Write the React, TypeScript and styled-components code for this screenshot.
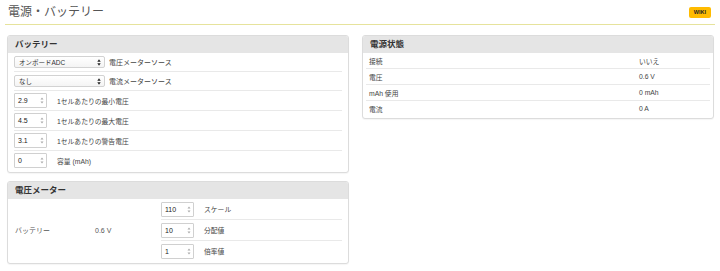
import { createGlobalStyle } from 'styled-components'
import styled from 'styled-components'

const GlobalStyle = createGlobalStyle`
    html, body {
        margin: 0;
        padding: 0;
        background: #fff;
    }
    body {
        font-family: "Liberation Sans", "Noto Sans CJK JP", sans-serif;
        color: #444;
    }
`

const Spinner = () => (
    <svg width="4" height="7" viewBox="0 0 4 7">
        <path d="M2 0.5 L3.5 2.5 L0.5 2.5 Z" fill="#aaa" />
        <path d="M2 6.5 L3.5 4.5 L0.5 4.5 Z" fill="#aaa" />
    </svg>
)

const SelectArrows = () => (
    <svg width="4" height="7" viewBox="0 0 4 7">
        <path d="M2 0.3 L3.7 2.7 L0.3 2.7 Z" fill="#222" />
        <path d="M2 6.7 L3.7 4.3 L0.3 4.3 Z" fill="#222" />
    </svg>
)

const NumberField = ({ value }: { value: string }) => (
    <NumberBox>
        <span>{value}</span>
        <Spinner />
    </NumberBox>
)

const SelectField = ({ value }: { value: string }) => (
    <SelectBox>
        <span>{value}</span>
        <SelectArrows />
    </SelectBox>
)

const batteryRows = [
    { value: '2.9', label: '1セルあたりの最小電圧' },
    { value: '4.5', label: '1セルあたりの最大電圧' },
    { value: '3.1', label: '1セルあたりの警告電圧' },
    { value: '0', label: '容量 (mAh)' },
]

const meterRows = [
    { value: '110', label: 'スケール' },
    { value: '10', label: '分配値' },
    { value: '1', label: '倍率値' },
]

const statusRows = [
    { label: '接続', value: 'いいえ' },
    { label: '電圧', value: '0.6 V' },
    { label: 'mAh 使用', value: '0 mAh' },
    { label: '電流', value: '0 A' },
]

const App = () => {
    return (
        <Page>
            <GlobalStyle />
            <Header>
                <Title>電源・バッテリー</Title>
                <WikiButton>WIKI</WikiButton>
            </Header>
            <Columns>
                <Column>
                    <Panel>
                        <PanelTitle>バッテリー</PanelTitle>
                        <PanelBody>
                            <Row $height={18}>
                                <SelectField value="オンボードADC" />
                                <SelectLabel>電圧メーターソース</SelectLabel>
                            </Row>
                            <Row $height={18}>
                                <SelectField value="なし" />
                                <SelectLabel>電流メーターソース</SelectLabel>
                            </Row>
                            {batteryRows.map((r) => (
                                <Row key={r.label} $height={19}>
                                    <NumberField value={r.value} />
                                    <FieldLabel>{r.label}</FieldLabel>
                                </Row>
                            ))}
                        </PanelBody>
                    </Panel>
                    <Panel>
                        <PanelTitle>電圧メーター</PanelTitle>
                        <MeterBody>
                            <MeterCell>バッテリー</MeterCell>
                            <MeterCell>0.6 V</MeterCell>
                            <MeterInputs>
                                {meterRows.map((r) => (
                                    <Row key={r.label} $height={20}>
                                        <NumberField value={r.value} />
                                        <FieldLabel>{r.label}</FieldLabel>
                                    </Row>
                                ))}
                            </MeterInputs>
                        </MeterBody>
                    </Panel>
                </Column>
                <Column>
                    <Panel>
                        <PanelTitle>電源状態</PanelTitle>
                        <StatusBody>
                            {statusRows.map((r) => (
                                <StatusRow key={r.label}>
                                    <span>{r.label}</span>
                                    <span>{r.value}</span>
                                </StatusRow>
                            ))}
                        </StatusBody>
                    </Panel>
                </Column>
            </Columns>
        </Page>
    )
}

const Page = styled.div`
    width: 720px;
    height: 271px;
    overflow: hidden;
    box-sizing: border-box;
`

const Header = styled.header`
    display: flex;
    justify-content: space-between;
    align-items: center;
    height: 24px;
    margin: 0 5px;
    padding: 0 4px 0 3px;
    border-bottom: 1px solid #e6e39c;
`

const Title = styled.h1`
    margin: 0;
    font-size: 12px;
    font-weight: normal;
    color: #555;
    line-height: 14px;
`

const WikiButton = styled.div`
    background: #ffbb00;
    color: #222;
    font-size: 5.5px;
    font-weight: bold;
    height: 11px;
    line-height: 11px;
    padding: 0 5px;
    border-radius: 2px;
`

const Columns = styled.div`
    display: grid;
    grid-template-columns: 342px 352px;
    gap: 13px;
    padding: 10px 0 0 7px;
`

const Column = styled.div`
    display: flex;
    flex-direction: column;
    gap: 8px;
`

const Panel = styled.section`
    border: 1px solid #dcdcdc;
    border-radius: 3px;
    background: #fff;
    overflow: hidden;
    box-shadow: 0 1px 1px rgba(0, 0, 0, 0.04);
`

const PanelTitle = styled.div`
    background: #e5e5e5;
    height: 17px;
    line-height: 17px;
    padding-left: 7px;
    font-size: 8.5px;
    font-weight: bold;
    color: #333;
`

const PanelBody = styled.div`
    padding: 0 6px 2px 6px;
`

const Row = styled.div<{ $height: number }>`
    display: flex;
    align-items: center;
    height: ${(p) => p.$height}px;
    border-bottom: 1px solid #e9e9e9;

    &:last-child {
        border-bottom: none;
    }
`

const SelectBox = styled.div`
    display: flex;
    align-items: center;
    justify-content: space-between;
    box-sizing: border-box;
    width: 91px;
    height: 12px;
    padding: 0 3px 0 4px;
    border: 1px solid #d2d2d2;
    border-radius: 2px;
    background: linear-gradient(#fff, #f4f4f4);
    font-size: 6.5px;
    color: #333;
`

const SelectLabel = styled.span`
    margin-left: 4px;
    font-size: 7px;
    color: #444;
`

const NumberBox = styled.div`
    display: flex;
    align-items: center;
    justify-content: space-between;
    box-sizing: border-box;
    width: 33px;
    height: 15px;
    padding: 0 2px 0 3px;
    border: 1px solid #d0d0d0;
    border-radius: 1px;
    background: #fff;
    font-size: 7px;
    color: #222;
`

const FieldLabel = styled.span`
    margin-left: 10px;
    font-size: 6.8px;
    color: #444;
`

const MeterBody = styled.div`
    display: grid;
    grid-template-columns: 80px 66px 1fr;
    align-items: center;
    padding: 0 6px 2px 7px;
`

const MeterCell = styled.div`
    font-size: 7px;
    color: #555;
`

const MeterInputs = styled.div`
    display: flex;
    flex-direction: column;
`

const StatusBody = styled.div`
    padding: 0 3px 2px 3px;
`

const StatusRow = styled.div`
    display: grid;
    grid-template-columns: 1fr 71px;
    align-items: center;
    height: 15px;
    padding-left: 3px;
    border-bottom: 1px solid #e9e9e9;
    font-size: 6.8px;
    color: #444;

    &:last-child {
        border-bottom: none;
    }
`

export default App
